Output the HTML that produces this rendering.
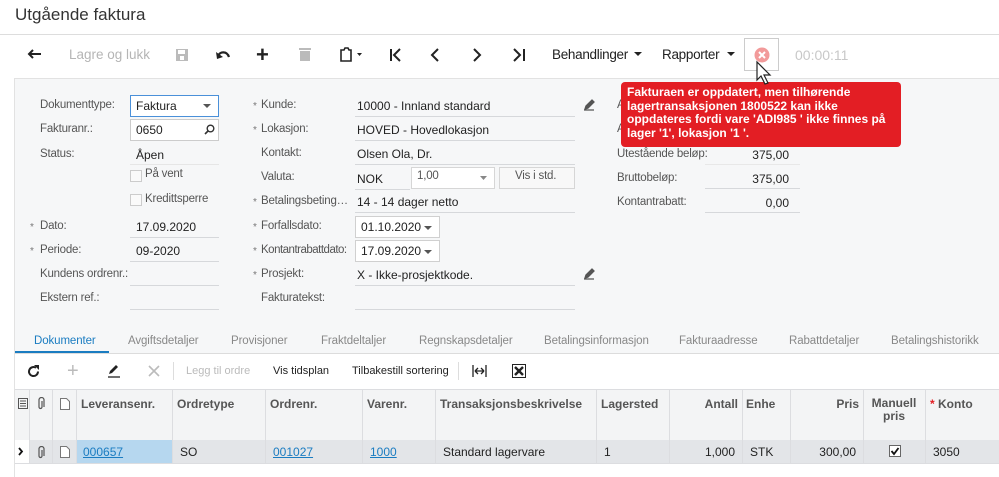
<!DOCTYPE html>
<html><head><meta charset="utf-8"><style>
*{box-sizing:border-box;margin:0;padding:0}
body{width:999px;height:477px;overflow:hidden;background:#fff;font-family:"Liberation Sans",Arial,sans-serif;font-size:12px;color:#222;position:relative}
.a{position:absolute;white-space:nowrap}
.lbl{color:#555;font-size:11.5px;letter-spacing:-0.2px}
.ul{position:absolute;height:1px;background:#d6d8db}
.st{color:#777;font-size:10px}
.tab{position:absolute;top:335px;color:#888;font-size:11.5px;letter-spacing:-0.1px}
.h{position:absolute;top:397px;color:#555;font-weight:bold;font-size:12px}
.vl{position:absolute;top:390px;width:1px;height:73px;background:#dcdde0}
.c{position:absolute;top:445px;font-size:12px}
a{color:#1a7cc1;text-decoration:underline}
</style></head><body>
<div class="a" style="left:15px;top:5px;font-size:17px;color:#333">Utgående faktura</div>
<div class="a" style="left:0;top:34px;width:999px;height:1px;background:#ddd"></div>

<!-- toolbar -->
<svg class="a" style="left:27px;top:48px" width="16" height="14"><path d="M2 6h12M6 2L2 6l4 4" stroke="#222" stroke-width="2" fill="none"/></svg>
<div class="a" style="left:69px;top:47px;font-size:13.5px;color:#b5b5b5">Lagre og lukk</div>
<svg class="a" style="left:175px;top:48px" width="14" height="14"><rect x="1" y="1" width="12" height="12" fill="#bbb"/><rect x="3" y="2" width="7" height="4" fill="#fff"/><rect x="5" y="8" width="4" height="4" fill="#fff"/></svg>
<svg class="a" style="left:215px;top:48px" width="16" height="14"><path d="M3 8c2-5 9-5 11 1" stroke="#222" stroke-width="2.2" fill="none"/><path d="M1 4l1 7 6-2z" fill="#222"/></svg>
<div class="a" style="left:256px;top:42px;font-size:22px;font-weight:bold;color:#222">+</div>
<svg class="a" style="left:299px;top:47px" width="12" height="15"><rect x="0" y="1" width="12" height="2" fill="#bbb"/><rect x="1" y="4" width="10" height="10" fill="#bbb"/></svg>
<svg class="a" style="left:339px;top:47px" width="24" height="16"><path d="M2 3h3l1-2h3l1 2h2v11H2z" stroke="#222" stroke-width="1.6" fill="none"/><path d="M18 6h5l-2.5 3z" fill="#222"/></svg>
<svg class="a" style="left:389px;top:48px" width="14" height="14"><path d="M2 1v12M11 1L5 7l6 6" stroke="#222" stroke-width="2" fill="none"/></svg>
<svg class="a" style="left:429px;top:48px" width="12" height="14"><path d="M9 1L3 7l6 6" stroke="#222" stroke-width="2" fill="none"/></svg>
<svg class="a" style="left:471px;top:48px" width="12" height="14"><path d="M3 1l6 6-6 6" stroke="#222" stroke-width="2" fill="none"/></svg>
<svg class="a" style="left:512px;top:48px" width="14" height="14"><path d="M12 1v12M2 1l6 6-6 6" stroke="#222" stroke-width="2" fill="none"/></svg>
<div class="a" style="left:552px;top:47px;font-size:13.5px;letter-spacing:-0.3px">Behandlinger</div>
<svg class="a" style="left:634px;top:52px" width="8" height="5"><path d="M0 0h8L4 4z" fill="#222"/></svg>
<div class="a" style="left:662px;top:47px;font-size:13.5px;letter-spacing:-0.3px">Rapporter</div>
<svg class="a" style="left:727px;top:52px" width="8" height="5"><path d="M0 0h8L4 4z" fill="#222"/></svg>
<div class="a" style="left:744px;top:38px;width:35px;height:33px;border:1px solid #ccc;background:#fff"></div>
<svg class="a" style="left:754px;top:47px" width="16" height="16"><circle cx="8" cy="8" r="7.5" fill="#f29a9a"/><path d="M5 5l6 6M11 5l-6 6" stroke="#fff" stroke-width="2"/></svg>
<div class="a" style="left:795px;top:47px;font-size:14px;color:#c8c8c8">00:00:11</div>

<!-- panel -->
<div class="a" style="left:14px;top:78px;width:985px;height:275px;background:#f6f7f8;border-left:1px solid #e2e2e2;border-top:1px solid #e2e2e2"></div>
<div class="a" style="left:14px;top:353px;width:1px;height:124px;background:#e2e2e2"></div>

<!-- col1 -->
<div class="a lbl" style="left:40px;top:99px">Dokumenttype:</div>
<div class="a" style="left:130px;top:95px;width:89px;height:22px;border:1px solid #4a90d9;background:#fff"></div>
<div class="a" style="left:136px;top:99px">Faktura</div>
<svg class="a" style="left:203px;top:104px" width="8" height="5"><path d="M0 0h8L4 4z" fill="#555"/></svg>
<div class="a lbl" style="left:40px;top:123px">Fakturanr.:</div>
<div class="a" style="left:130px;top:119px;width:89px;height:22px;border:1px solid #ccc;background:#fff"></div>
<div class="a" style="left:136px;top:123px">0650</div>
<svg class="a" style="left:204px;top:124px" width="11" height="11"><circle cx="6.5" cy="4.5" r="3.3" stroke="#333" stroke-width="1.4" fill="none"/><path d="M4 7l-3 3" stroke="#333" stroke-width="1.6"/></svg>
<div class="a lbl" style="left:40px;top:148px">Status:</div>
<div class="a" style="left:136px;top:148px">Åpen</div>
<div class="ul" style="left:130px;top:164px;width:89px;background:#e6e6e6"></div>
<div class="a" style="left:130px;top:170px;width:12px;height:12px;border:1px solid #ccc;background:#fafafa"></div>
<div class="a lbl" style="left:145px;top:168px">På vent</div>
<div class="a" style="left:130px;top:194px;width:12px;height:12px;border:1px solid #ccc;background:#fafafa"></div>
<div class="a lbl" style="left:145px;top:193px">Kredittsperre</div>
<div class="a st" style="left:30px;top:222px">*</div><div class="a lbl" style="left:40px;top:220px">Dato:</div>
<div class="a" style="left:136px;top:220px">17.09.2020</div>
<div class="ul" style="left:130px;top:237px;width:89px"></div>
<div class="a st" style="left:30px;top:246px">*</div><div class="a lbl" style="left:40px;top:244px">Periode:</div>
<div class="a" style="left:136px;top:244px">09-2020</div>
<div class="ul" style="left:130px;top:261px;width:89px"></div>
<div class="a lbl" style="left:40px;top:268px">Kundens ordrenr.:</div>
<div class="ul" style="left:130px;top:285px;width:89px"></div>
<div class="a lbl" style="left:40px;top:292px">Ekstern ref.:</div>
<div class="ul" style="left:130px;top:309px;width:89px"></div>

<!-- col2 -->
<div class="a st" style="left:253px;top:101px">*</div><div class="a lbl" style="left:261px;top:99px">Kunde:</div>
<div class="a" style="left:357px;top:99px">10000 - Innland standard</div>
<div class="ul" style="left:355px;top:116px;width:220px"></div>
<div class="a st" style="left:253px;top:125px">*</div><div class="a lbl" style="left:261px;top:123px">Lokasjon:</div>
<div class="a" style="left:357px;top:123px">HOVED - Hovedlokasjon</div>
<div class="ul" style="left:355px;top:140px;width:220px"></div>
<div class="a lbl" style="left:261px;top:147px">Kontakt:</div>
<div class="a" style="left:357px;top:147px">Olsen Ola, Dr.</div>
<div class="ul" style="left:355px;top:164px;width:220px"></div>
<div class="a lbl" style="left:261px;top:171px">Valuta:</div>
<div class="a" style="left:357px;top:172px">NOK</div>
<div class="ul" style="left:355px;top:189px;width:55px"></div>
<div class="a" style="left:411px;top:167px;width:84px;height:22px;border:1px solid #d6d6d6;background:#fff"></div>
<div class="a lbl" style="left:417px;top:170px">1,00</div>
<svg class="a" style="left:480px;top:176px" width="7" height="4"><path d="M0 0h7L3.5 4z" fill="#888"/></svg>
<div class="a" style="left:499px;top:167px;width:76px;height:22px;border:1px solid #d6d6d6;background:#f8f8f8"></div>
<div class="a lbl" style="left:515px;top:170px">Vis i std.</div>
<div class="a st" style="left:253px;top:197px">*</div><div class="a lbl" style="left:261px;top:195px">Betalingsbeting…</div>
<div class="a" style="left:357px;top:195px">14 - 14 dager netto</div>
<div class="ul" style="left:355px;top:212px;width:220px"></div>
<div class="a st" style="left:253px;top:222px">*</div><div class="a lbl" style="left:261px;top:220px">Forfallsdato:</div>
<div class="a" style="left:355px;top:216px;width:85px;height:22px;border:1px solid #d0d0d0;background:#fff"></div>
<div class="a" style="left:361px;top:220px">01.10.2020</div>
<svg class="a" style="left:424px;top:226px" width="8" height="5"><path d="M0 0h8L4 4z" fill="#555"/></svg>
<div class="a st" style="left:253px;top:246px">*</div><div class="a lbl" style="left:261px;top:244px;letter-spacing:-0.5px">Kontantrabattdato:</div>
<div class="a" style="left:355px;top:240px;width:85px;height:22px;border:1px solid #d0d0d0;background:#fff"></div>
<div class="a" style="left:361px;top:244px">17.09.2020</div>
<svg class="a" style="left:424px;top:250px" width="8" height="5"><path d="M0 0h8L4 4z" fill="#555"/></svg>
<div class="a st" style="left:253px;top:270px">*</div><div class="a lbl" style="left:261px;top:268px">Prosjekt:</div>
<div class="a" style="left:357px;top:268px">X - Ikke-prosjektkode.</div>
<div class="ul" style="left:355px;top:285px;width:220px"></div>
<div class="a lbl" style="left:261px;top:292px">Fakturatekst:</div>
<div class="ul" style="left:355px;top:309px;width:220px"></div>
<svg class="a" style="left:583px;top:99px" width="12" height="12"><path d="M2 10l1-3 6-6 2 2-6 6z M1 11h10" stroke="#555" stroke-width="1.3" fill="#555"/></svg>
<svg class="a" style="left:583px;top:268px" width="12" height="12"><path d="M2 10l1-3 6-6 2 2-6 6z M1 11h10" stroke="#555" stroke-width="1.3" fill="#555"/></svg>

<!-- col3 -->
<div class="a lbl" style="left:617px;top:99px">A</div>
<div class="a lbl" style="left:617px;top:123px">A</div>
<div class="a lbl" style="left:617px;top:148px">Utestående beløp:</div>
<div class="a" style="left:700px;top:148px;width:89px;text-align:right">375,00</div>
<div class="ul" style="left:705px;top:164px;width:95px;background:#e8e8e8"></div>
<div class="a lbl" style="left:617px;top:172px">Bruttobeløp:</div>
<div class="a" style="left:700px;top:172px;width:89px;text-align:right">375,00</div>
<div class="ul" style="left:705px;top:188px;width:95px"></div>
<div class="a lbl" style="left:617px;top:196px">Kontantrabatt:</div>
<div class="a" style="left:700px;top:196px;width:89px;text-align:right">0,00</div>
<div class="ul" style="left:705px;top:212px;width:95px"></div>

<!-- tooltip -->
<div class="a" style="left:621px;top:82px;width:280px;height:65px;background:#e31e24;border-radius:4px"></div>
<div class="a" style="left:627px;top:86px;color:#fff;font-weight:bold;font-size:12px;line-height:13.5px">Fakturaen er oppdatert, men tilhørende<br>lagertransaksjonen 1800522 kan ikke<br>oppdateres fordi vare 'ADI985 ' ikke finnes på<br>lager '1', lokasjon '1 '.</div>
<svg class="a" style="left:755px;top:60px" width="20" height="26"><path d="M2 2v18l4-4 4 8 3-1-4-8h6z" fill="#fff" stroke="#222" stroke-width="1.2"/></svg>

<!-- tabs -->
<div class="a" style="left:15px;top:353px;width:984px;height:1px;background:#dcdcdc"></div>
<div class="a" style="left:15px;top:351px;width:94px;height:2px;background:#1a7cc1"></div>
<div class="tab" style="left:34px;color:#1a7cc1">Dokumenter</div>
<div class="tab" style="left:128px">Avgiftsdetaljer</div>
<div class="tab" style="left:231px">Provisjoner</div>
<div class="tab" style="left:321px">Fraktdeltaljer</div>
<div class="tab" style="left:419px">Regnskapsdetaljer</div>
<div class="tab" style="left:544px">Betalingsinformasjon</div>
<div class="tab" style="left:679px">Fakturaadresse</div>
<div class="tab" style="left:789px">Rabattdetaljer</div>
<div class="tab" style="left:891px">Betalingshistorikk</div>

<!-- grid toolbar -->
<svg class="a" style="left:27px;top:365px" width="13" height="13"><path d="M11 6.5A4.5 4.5 0 1 1 9 2.8" stroke="#222" stroke-width="2" fill="none"/><path d="M7 0h5v5z" fill="#222"/></svg>
<div class="a" style="left:67px;top:360px;font-size:20px;color:#bbb">+</div>
<svg class="a" style="left:107px;top:364px" width="14" height="14"><path d="M2 10l1-3 6-6 2 2-6 6z" fill="#222"/><path d="M1 13h12" stroke="#222" stroke-width="1.3"/></svg>
<svg class="a" style="left:148px;top:365px" width="12" height="12"><path d="M1 1l10 10M11 1L1 11" stroke="#bbb" stroke-width="1.6"/></svg>
<div class="a" style="left:173px;top:362px;width:1px;height:18px;background:#ddd"></div>
<div class="a" style="left:186px;top:365px;font-size:11px;color:#bbb">Legg til ordre</div>
<div class="a" style="left:273px;top:365px;font-size:11px">Vis tidsplan</div>
<div class="a" style="left:352px;top:365px;font-size:11px">Tilbakestill sortering</div>
<div class="a" style="left:458px;top:362px;width:1px;height:18px;background:#ddd"></div>
<svg class="a" style="left:472px;top:365px" width="15" height="12"><path d="M1 0v12M14 0v12M3 6h9M3 6l3-3M3 6l3 3M12 6l-3-3M12 6l-3 3" stroke="#222" stroke-width="1.3" fill="none"/></svg>
<svg class="a" style="left:512px;top:364px" width="14" height="14"><rect x=".5" y=".5" width="13" height="13" fill="#fff" stroke="#222"/><path d="M3 3l8 8M11 3l-8 8" stroke="#222" stroke-width="2.4"/></svg>

<!-- grid -->
<div class="a" style="left:15px;top:390px;width:984px;height:50px;background:#f3f4f5"></div>
<div class="a" style="left:15px;top:389px;width:984px;height:1px;background:#dcdde0"></div>
<div class="a" style="left:15px;top:440px;width:984px;height:23px;background:#e3e5e8"></div>
<div class="a" style="left:15px;top:440px;width:14px;height:23px;background:#fff"></div>
<div class="a" style="left:77px;top:440px;width:95px;height:23px;background:#b6d7ef"></div>
<div class="a" style="left:15px;top:463px;width:984px;height:1px;background:#dcdde0"></div>
<div class="vl" style="left:29px"></div><div class="vl" style="left:52px"></div><div class="vl" style="left:76px"></div>
<div class="vl" style="left:172px"></div><div class="vl" style="left:265px"></div><div class="vl" style="left:362px"></div>
<div class="vl" style="left:435px"></div><div class="vl" style="left:596px"></div><div class="vl" style="left:669px"></div>
<div class="vl" style="left:742px"></div><div class="vl" style="left:790px"></div><div class="vl" style="left:863px"></div>
<div class="vl" style="left:925px"></div>
<svg class="a" style="left:18px;top:398px" width="10" height="11"><rect x=".5" y=".5" width="9" height="10" fill="none" stroke="#555"/><path d="M2 3h6M2 5.5h6M2 8h6" stroke="#555"/></svg>
<svg class="a" style="left:37px;top:397px" width="8" height="13"><path d="M5 4v6a1.5 1.5 0 0 1-3 0V3a2.5 2.5 0 0 1 5 0v7" stroke="#555" stroke-width="1.2" fill="none"/></svg>
<svg class="a" style="left:60px;top:398px" width="10" height="12"><path d="M.5 .5h6l3 3v8h-9z" fill="#fff" stroke="#777"/></svg>
<div class="h" style="left:81px">Leveransenr.</div>
<div class="h" style="left:177px">Ordretype</div>
<div class="h" style="left:270px">Ordrenr.</div>
<div class="h" style="left:367px">Varenr.</div>
<div class="h" style="left:440px">Transaksjonsbeskrivelse</div>
<div class="h" style="left:601px">Lagersted</div>
<div class="h" style="left:674px;width:64px;text-align:right">Antall</div>
<div class="h" style="left:746px">Enhe</div>
<div class="h" style="left:795px;width:64px;text-align:right">Pris</div>
<div class="h" style="left:866px;width:56px;text-align:center;line-height:13px">Manuell<br>pris</div>
<div class="h" style="left:930px"><span style="color:#e31e24">*</span> Konto</div>

<svg class="a" style="left:18px;top:447px" width="6" height="9"><path d="M1 1l3 3.5L1 8" stroke="#111" stroke-width="1.8" fill="none"/></svg>
<svg class="a" style="left:37px;top:446px" width="8" height="13"><path d="M5 4v6a1.5 1.5 0 0 1-3 0V3a2.5 2.5 0 0 1 5 0v7" stroke="#555" stroke-width="1.2" fill="none"/></svg>
<svg class="a" style="left:60px;top:446px" width="10" height="12"><path d="M.5 .5h6l3 3v8h-9z" fill="#fff" stroke="#777"/></svg>
<div class="c" style="left:83px"><a>000657</a></div>
<div class="c" style="left:180px">SO</div>
<div class="c" style="left:273px"><a>001027</a></div>
<div class="c" style="left:370px"><a>1000</a></div>
<div class="c" style="left:443px">Standard lagervare</div>
<div class="c" style="left:604px">1</div>
<div class="c" style="left:674px;width:61px;text-align:right">1,000</div>
<div class="c" style="left:750px">STK</div>
<div class="c" style="left:795px;width:61px;text-align:right">300,00</div>
<svg class="a" style="left:889px;top:445px" width="12" height="12"><rect x=".5" y=".5" width="11" height="11" fill="#fff" stroke="#666"/><path d="M2.5 6l2.5 3 4.5-6" stroke="#111" stroke-width="1.8" fill="none"/></svg>
<div class="c" style="left:933px">3050</div>
</body></html>
